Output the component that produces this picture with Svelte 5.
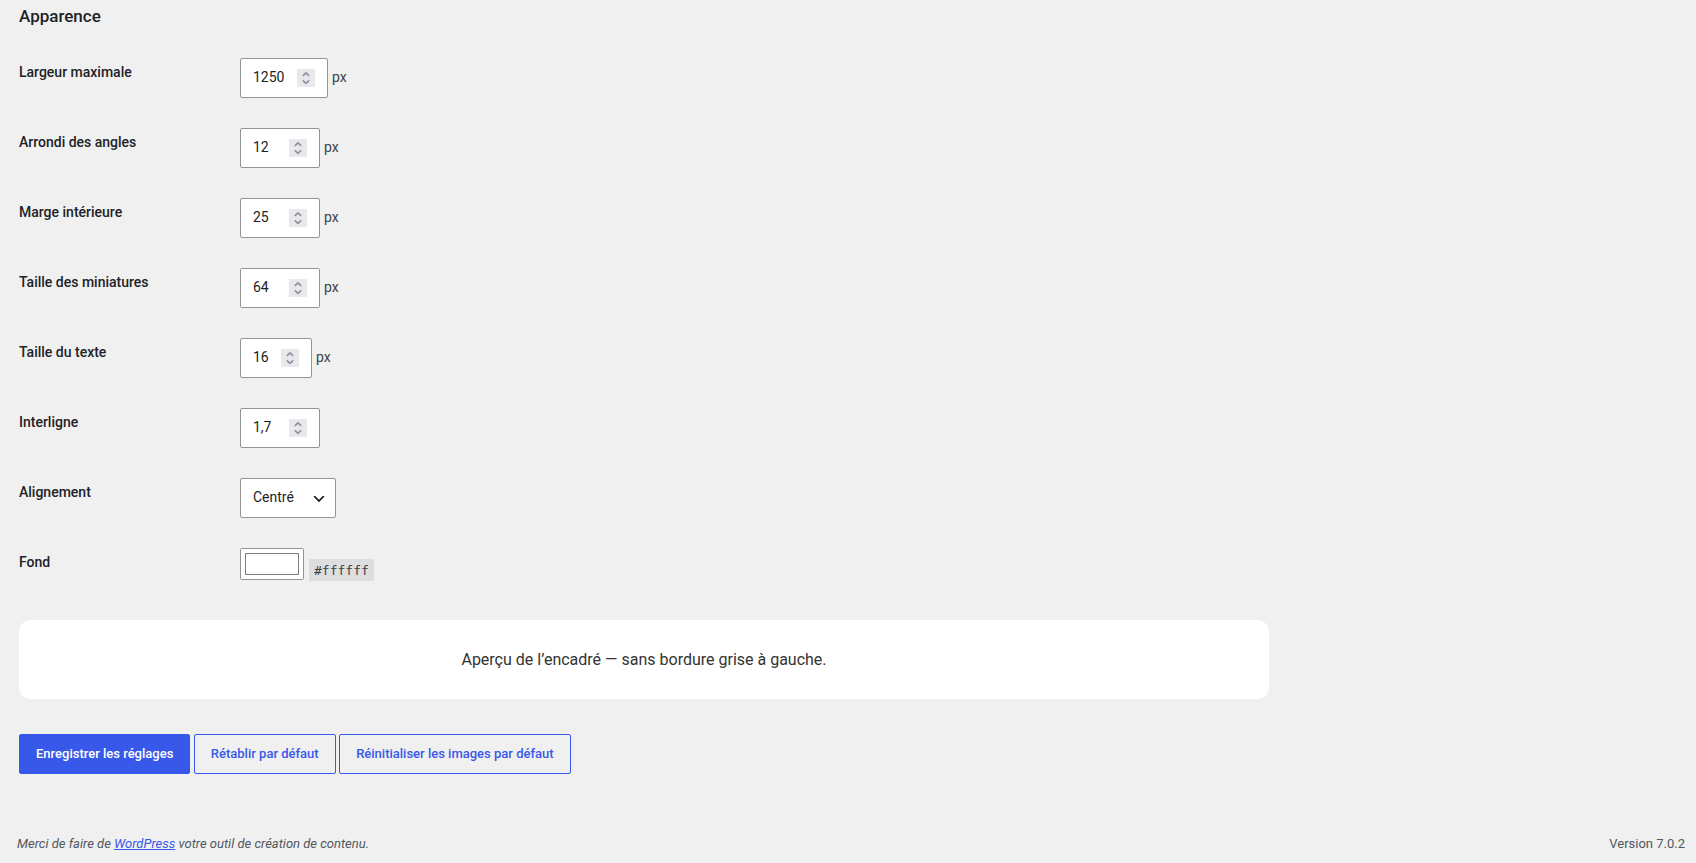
<script>
  const fields = [
    { id: 'max-width', label: 'Largeur maximale', value: '1250', size: 'large', unit: 'px' },
    { id: 'radius', label: 'Arrondi des angles', value: '12', size: 'medium', unit: 'px' },
    { id: 'padding', label: 'Marge intérieure', value: '25', size: 'medium', unit: 'px' },
    { id: 'thumb-size', label: 'Taille des miniatures', value: '64', size: 'medium', unit: 'px' },
    { id: 'font-size', label: 'Taille du texte', value: '16', size: 'small', unit: 'px' },
    { id: 'line-height', label: 'Interligne', value: '1,7', size: 'medium', unit: '' }
  ];
  let background = $state('#ffffff');
</script>

<div class="page">
  <main>
    <h2>Apparence</h2>
    <form onsubmit={(e) => e.preventDefault()}>
      {#each fields as field (field.id)}
        <div class="row">
          <label for={field.id}>{field.label}</label>
          <div class="control">
            <span class="number {field.size}">
              <input id={field.id} type="text" inputmode="decimal" value={field.value} />
              <svg viewBox="0 0 18 18" aria-hidden="true">
                <rect width="18" height="18" fill="#e9e9ed" />
                <path d="M5.8 6.8 9 3.8l3.2 3M5.8 11.4l3.2 3 3.2-3" fill="none" stroke="#8f8f9d" stroke-width="1.6" />
              </svg>
            </span>
            {#if field.unit}<span class="unit">{field.unit}</span>{/if}
          </div>
        </div>
      {/each}
      <div class="row">
        <label for="align">Alignement</label>
        <div class="control">
          <span class="select">
            <select id="align">
              <option>Gauche</option>
              <option selected>Centré</option>
              <option>Droite</option>
            </select>
            <svg viewBox="0 0 20 20" aria-hidden="true">
              <path d="m5 6 5 5 5-5 2 1-7 7-7-7z" fill="#1e1e1e" />
            </svg>
          </span>
        </div>
      </div>
      <div class="row">
        <label for="background">Fond</label>
        <div class="control color">
          <input id="background" type="color" bind:value={background} />
          <code>{background}</code>
        </div>
      </div>

      <div class="preview">Aperçu de l’encadré — sans bordure grise à gauche.</div>

      <div class="actions">
        <button type="submit" class="primary">Enregistrer les réglages</button>
        <button type="button">Rétablir par défaut</button>
        <button type="button">Réinitialiser les images par défaut</button>
      </div>
    </form>
  </main>
  <footer>
    <p><em>Merci de faire de <a href="https://fr.wordpress.org/">WordPress</a> votre outil de création de contenu.</em></p>
    <p>Version 7.0.2</p>
  </footer>
</div>

<style>
  :global(body) {
    background: #f0f0f0;
  }
  .page {
    color: #3c434a;
    font-family: Roboto, sans-serif;
    font-size: 14px;
    line-height: 20px;
  }
  main {
    padding: 6px 20px 0 19px;
  }
  h2 {
    margin: 0 0 17px;
    color: #1d2327;
    font-size: 17px;
    font-weight: 500;
    line-height: 20px;
  }
  .row {
    display: grid;
    grid-template-columns: 221px 1fr;
    align-items: start;
    padding: 15px 0;
  }
  label {
    padding-top: 4px;
    color: #1d2327;
    font-weight: 500;
  }
  .control {
    display: flex;
    align-items: center;
    gap: 4px;
  }
  .unit {
    padding-bottom: 2px;
  }
  .number,
  .select {
    position: relative;
    display: block;
  }
  .number.large {
    width: 88px;
  }
  .number.medium {
    width: 80px;
  }
  .number.small {
    width: 72px;
  }
  .select {
    width: 96px;
  }
  .number input,
  select {
    display: block;
    width: 100%;
    height: 40px;
    box-sizing: border-box;
    margin: 0;
    padding: 0 12px 2px;
    appearance: none;
    border: 1px solid #949494;
    border-radius: 2px;
    background: #fff;
    color: #1e1e1e;
    font: inherit;
  }
  .number svg {
    position: absolute;
    top: 11px;
    right: 13px;
    width: 18px;
    height: 18px;
  }
  .select svg {
    position: absolute;
    top: 13px;
    right: 9px;
    width: 16px;
    height: 16px;
    pointer-events: none;
  }
  .color {
    align-items: flex-start;
    gap: 5px;
  }
  input[type='color'] {
    width: 64px;
    height: 32px;
    box-sizing: border-box;
    margin: 0;
    padding: 4px;
    appearance: none;
    border: 1px solid #949494;
    border-radius: 2px;
    background: #fff;
  }
  input[type='color']::-webkit-color-swatch-wrapper {
    padding: 0;
  }
  input[type='color']::-webkit-color-swatch {
    border: 1px solid #808080;
    border-radius: 0;
  }
  code {
    margin-top: 11px;
    padding: 2px 5px 0;
    background: #dedede;
    font-family: 'DejaVu Sans Mono', monospace;
    font-size: 13px;
    line-height: 20px;
  }
  .preview {
    max-width: 1250px;
    box-sizing: border-box;
    margin-top: 24px;
    padding: 25px;
    border-radius: 12px;
    background: #fff;
    color: #333;
    font-size: 16px;
    line-height: 29px;
    text-align: center;
  }
  .actions {
    margin-top: 35px;
  }
  button {
    height: 40px;
    padding: 0 16px;
    border: 1px solid #3858e9;
    border-radius: 2px;
    background: transparent;
    color: #3858e9;
    font: 500 13px/20px Roboto, sans-serif;
    vertical-align: top;
  }
  .primary {
    background: #3858e9;
    color: #fff;
  }
  footer {
    display: flex;
    justify-content: space-between;
    margin-top: 60px;
    padding: 0 11px 10px 17px;
    color: #50575e;
    font-size: 13px;
    line-height: 19px;
  }
  footer p {
    margin: 0;
  }
  a {
    color: #3858e9;
  }
</style>
